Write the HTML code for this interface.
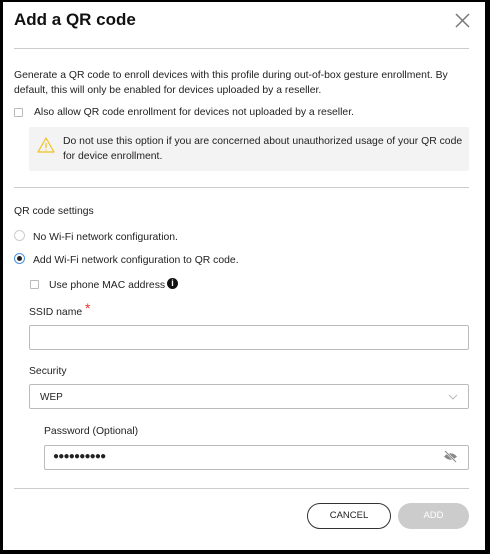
<!DOCTYPE html>
<html><head><style>
*{box-sizing:border-box;margin:0;padding:0}
body{width:490px;height:554px;background:#000;position:relative;font-family:"Liberation Sans",sans-serif;color:#222;overflow:hidden}
.m{position:absolute;left:3px;top:2px;width:482px;height:548px;background:#fff}
.a{position:absolute;white-space:nowrap}
.t{font-size:10.4px;line-height:15px;margin-top:1px}
.hr{position:absolute;left:14px;width:455px;height:1px;background:#ccc}
.cb{position:absolute;width:9px;height:9px;border:1px solid #bbb;border-radius:1px;background:#fff}
.in{position:absolute;border:1px solid #bbb;border-radius:2px;background:#fff}
</style></head><body>
<div class="m"></div>
<div class="a" style="left:14px;top:10px;font-size:17px;font-weight:bold;color:#111">Add a QR code</div>
<svg class="a" style="left:455px;top:13px" width="15" height="15"><path d="M1 1L14 14M14 1L1 14" stroke="#777" stroke-width="1.5"/></svg>
<div class="hr" style="top:48px"></div>
<div class="a t" style="left:14px;top:67px">Generate a QR code to enroll devices with this profile during out-of-box gesture enrollment. By</div>
<div class="a t" style="left:14px;top:82px">default, this will only be enabled for devices uploaded by a reseller.</div>
<div class="cb" style="left:14px;top:108px"></div>
<div class="a t" style="left:34px;top:104px">Also allow QR code enrollment for devices not uploaded by a reseller.</div>
<div class="a" style="left:29px;top:127px;width:440px;height:44px;background:#f3f3f3;border-radius:2px"></div>
<svg class="a" style="left:37px;top:137px" width="18" height="16"><path d="M9 1L17 15H1Z" fill="none" stroke="#f0c020" stroke-width="1.2" stroke-linejoin="round"/><path d="M9 6V11M9 12.5V13.5" stroke="#f0c020" stroke-width="1.2"/></svg>
<div class="a t" style="left:63px;top:133px">Do not use this option if you are concerned about unauthorized usage of your QR code</div>
<div class="a t" style="left:63px;top:148px">for device enrollment.</div>
<div class="hr" style="top:187px"></div>
<div class="a t" style="left:14px;top:203px">QR code settings</div>
<div class="a" style="left:14px;top:230px;width:11px;height:11px;border:1px solid #ccc;border-radius:50%"></div>
<div class="a t" style="left:33px;top:229px">No Wi-Fi network configuration.</div>
<div class="a" style="left:14px;top:253px;width:11px;height:11px;border:1px solid #4a90d9;border-radius:50%"></div>
<div class="a" style="left:17px;top:256px;width:5px;height:5px;background:#222;border-radius:50%"></div>
<div class="a t" style="left:33px;top:252px">Add Wi-Fi network configuration to QR code.</div>
<div class="cb" style="left:30px;top:280px"></div>
<div class="a t" style="left:49px;top:277px">Use phone MAC address</div>
<div class="a" style="left:167px;top:278px;width:11px;height:11px;border-radius:50%;background:#111;color:#fff;font-size:9px;line-height:11px;text-align:center;font-weight:bold">i</div>
<div class="a t" style="left:29px;top:302px">SSID name <span style="color:#e33;font-size:14px;position:relative;top:-2px">*</span></div>
<div class="in" style="left:29px;top:325px;width:440px;height:25px"></div>
<div class="a t" style="left:29px;top:363px">Security</div>
<div class="in" style="left:29px;top:384px;width:440px;height:25px"></div>
<div class="a t" style="left:40px;top:389px;font-size:10px">WEP</div>
<svg class="a" style="left:448px;top:394px" width="10" height="6"><path d="M1 1L5 5L9 1" fill="none" stroke="#bbb"/></svg>
<div class="a t" style="left:44px;top:423px">Password (Optional)</div>
<div class="in" style="left:44px;top:445px;width:425px;height:25px"></div>
<div class="a" style="left:53px;top:451px;font-size:10px;letter-spacing:-0.8px">●●●●●●●●●●</div>
<svg class="a" style="left:443px;top:450px" width="15" height="13"><path d="M1 6.5Q7.5 0 14 6.5Q7.5 13 1 6.5Z" fill="#888"/><path d="M2 1L13 12" stroke="#fff" stroke-width="2"/><path d="M2 1L13 12" stroke="#888" stroke-width="1"/></svg>
<div class="hr" style="top:488px"></div>
<div class="a" style="left:307px;top:503px;width:84px;height:26px;border:1px solid #333;border-radius:13px;font-size:9.5px;line-height:24px;text-align:center">CANCEL</div>
<div class="a" style="left:398px;top:503px;width:71px;height:26px;background:#ccc;border-radius:13px;font-size:9.5px;line-height:26px;text-align:center;color:#fff">ADD</div>
</body></html>
